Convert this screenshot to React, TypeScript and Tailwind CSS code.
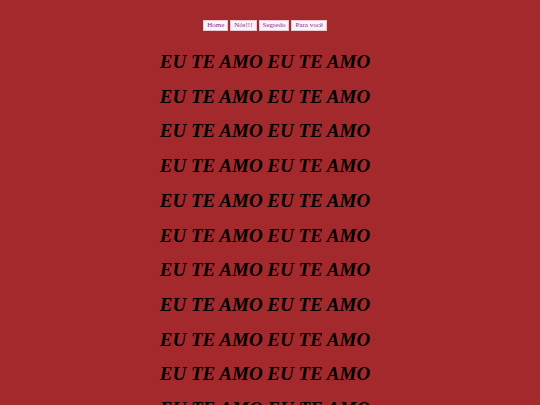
export default function App() {
  const lines = Array.from({ length: 11 });
  const btn =
    "bg-[#fbf3f6] border border-[#e8c9d4] text-[#8a2a9a] text-[7px] leading-[7px] px-[3px] py-[1px]";
  return (
    <div
      className="min-h-[405px] h-[405px] overflow-hidden bg-[#a3292c] pr-[10px]"
      style={{ fontFamily: '"Liberation Serif", serif' }}
    >
      <div className="flex justify-center gap-[2px] pt-[20px]">
        <span className={btn}>Home</span>
        <span className={btn}>Nós!!!</span>
        <span className={btn}>Segredo</span>
        <span className={btn}>Para você</span>
      </div>
      <div className="mt-[14px] flex flex-col items-center">
        {lines.map((_, i) => (
          <div
            key={i}
            className="text-[19px] leading-[34.7px] font-bold italic text-black whitespace-nowrap"
          >
            EU TE AMO EU TE AMO
          </div>
        ))}
      </div>
    </div>
  );
}
